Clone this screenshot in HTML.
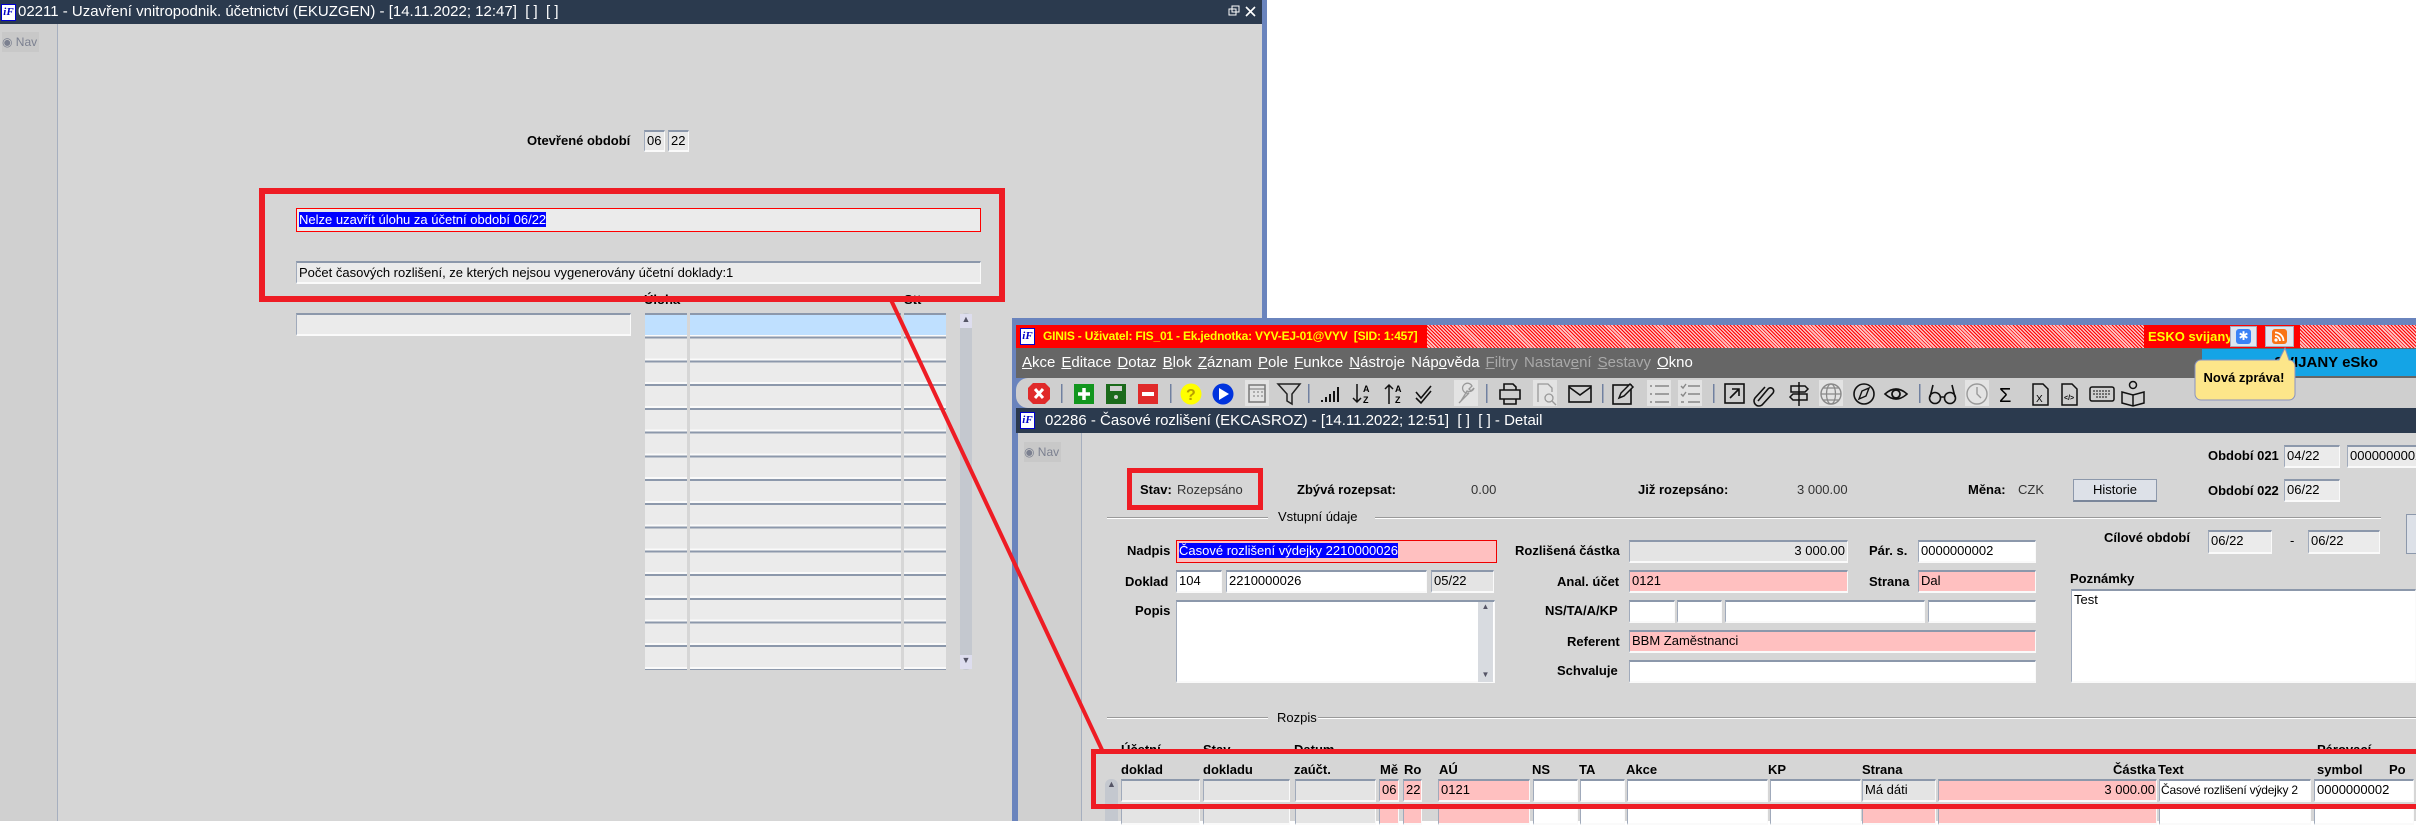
<!DOCTYPE html>
<html><head><meta charset="utf-8">
<style>
*{margin:0;padding:0;box-sizing:border-box}
body{width:2416px;height:821px;position:relative;overflow:hidden;background:#fff;font-family:"Liberation Sans",Arial,sans-serif;font-size:13px;color:#000}
.a{position:absolute}
.tb{background:#2b3a4e;color:#fff;font-size:15px;white-space:nowrap}
.f{position:absolute;background:#ebebeb;border-top:2px solid #8c98ab;border-left:1px solid #a0aabb;border-right:1px solid #fafafa;border-bottom:2px solid #fafafa;font-size:13px;line-height:18px;padding-left:2px;white-space:nowrap;overflow:hidden}
.w{background:#fff}.p{background:#ffc0c0}.g{background:#e4e4e4}
.l{position:absolute;font-weight:bold;font-size:13px;white-space:nowrap}
.t{position:absolute;font-size:13px;white-space:nowrap}
.ico{position:absolute;width:15px;height:17px;background:#fff;border:1px solid #00c;color:#0000c8;font:bold italic 11px "Liberation Serif",serif;line-height:15px;text-align:center}
.col{position:absolute;background:repeating-linear-gradient(to bottom,#8c98ab 0 2px,#ebebeb 2px 21.7px,#fafafa 21.7px 23.73px)}
.sel{background:#0000ff;color:#fff}
.menu span{margin-right:6px}
.menu u{text-decoration:underline}
.nav{position:absolute;height:20px;background:#c8c8c8;color:#7b8090;font-size:12px;line-height:20px;white-space:nowrap;padding-right:2px}
.hatch{background:repeating-linear-gradient(45deg,#f00 0 1px,#ffc4c4 1px 2.5px)}
</style></head><body>

<!-- LEFT WINDOW -->
<div class="a" style="left:0;top:0;width:1262px;height:821px;background:#d6d6d6"></div>
<div class="a tb" style="left:0;top:0;width:1262px;height:24px;line-height:24px;padding-left:18px">02211 - Uzavření vnitropodnik. účetnictví (EKUZGEN) - [14.11.2022; 12:47] &nbsp;[ ] &nbsp;[ ]</div>
<div class="ico" style="left:1px;top:4px">iF</div>
<svg class="a" style="left:1226px;top:4px" width="34" height="16"><rect x="3" y="5" width="7" height="6" fill="none" stroke="#fff"/><rect x="6" y="2" width="7" height="6" fill="none" stroke="#fff"/><path d="M20 3l9 9M29 3l-9 9" stroke="#fff" stroke-width="1.6"/></svg>
<div class="a" style="left:1262px;top:0;width:5px;height:821px;background:#6a84bd"></div>
<div class="a" style="left:0;top:24px;width:58px;height:797px;background:#d0d0d0;border-right:1px solid #a6afbf"></div>
<div class="nav" style="left:2px;top:32px">◉ Nav</div>

<div class="l" style="left:527px;top:133px">Otevřené období</div>
<div class="f" style="left:644px;top:130px;width:21px;height:22px;background:#e8e8e8">06</div>
<div class="f" style="left:668px;top:130px;width:21px;height:22px;background:#e8e8e8">22</div>

<div class="f" style="left:296px;top:208px;width:685px;height:24px;border:1px solid #f00;line-height:21px"><span class="sel">Nelze uzavřít úlohu za účetní období 06/22</span></div>
<div class="f" style="left:296px;top:261px;width:685px;height:23px;line-height:19px">Počet časových rozlišení, ze kterých nejsou vygenerovány účetní doklady:1</div>
<div class="l" style="left:644px;top:292px">Úloha</div>
<div class="l" style="left:904px;top:292px">Stt</div>
<div class="f" style="left:296px;top:313px;width:335px;height:23px"></div>
<div class="col" style="left:645px;top:313px;width:42px;height:357px"></div>
<div class="col" style="left:690px;top:313px;width:211px;height:357px"></div>
<div class="col" style="left:904px;top:313px;width:42px;height:357px"></div>
<div class="a" style="left:645px;top:315px;width:42px;height:20px;background:#bfe0ff"></div>
<div class="a" style="left:690px;top:315px;width:211px;height:20px;background:#bfe0ff"></div>
<div class="a" style="left:904px;top:315px;width:42px;height:20px;background:#bfe0ff"></div>
<div class="a" style="left:960px;top:313px;width:12px;height:357px;background:#c4c8cf;border-radius:6px"></div>
<div class="a" style="left:960px;top:314px;width:12px;height:14px;color:#556;font-size:9px;text-align:center;background:#dde">▲</div>
<div class="a" style="left:960px;top:655px;width:12px;height:14px;color:#556;font-size:9px;text-align:center;background:#dde">▼</div>

<div class="a" style="left:259px;top:188px;width:746px;height:114px;border:6px solid #ee1c24"></div>

<!-- RIGHT WINDOW -->
<div class="a" style="left:1012px;top:318px;width:1404px;height:503px;background:#6a84bd"></div>
<div class="a" style="left:1016px;top:325px;width:1400px;height:23px;background:#f00"></div>
<div class="a hatch" style="left:1427px;top:325px;width:717px;height:23px"></div>
<div class="a hatch" style="left:2300px;top:325px;width:116px;height:23px"></div>
<div class="ico" style="left:1020px;top:328px">iF</div>
<div class="a" style="left:1043px;top:325px;line-height:23px;color:#ff0;font-weight:bold;font-size:12px;letter-spacing:-0.2px;white-space:nowrap">GINIS - Uživatel: FIS_01 - Ek.jednotka: VYV-EJ-01@VYV &nbsp;[SID: 1:457]</div>
<div class="a" style="left:2148px;top:325px;line-height:23px;color:#ff0;font-weight:bold;font-size:13px;white-space:nowrap">ESKO svijany</div>
<div class="a" style="left:2230px;top:326px;width:27px;height:21px;background:#dfe6f0;border:1px solid #aab"></div>
<div class="a" style="left:2236px;top:329px;width:15px;height:15px;background:#3b82f6;border-radius:3px;color:#fff;font-size:12px;line-height:15px;text-align:center">✱</div>
<div class="a" style="left:2265px;top:326px;width:29px;height:21px;background:#dfe6f0;border:1px solid #aab"></div>
<div class="a" style="left:2272px;top:329px;width:15px;height:15px;background:#f97316;border-radius:3px"></div>
<svg class="a" style="left:2272px;top:329px" width="15" height="15"><circle cx="4" cy="11" r="1.6" fill="#fff"/><path d="M3 7a5 5 0 0 1 5 5M3 3.5a8.5 8.5 0 0 1 8.5 8.5" stroke="#fff" stroke-width="1.8" fill="none"/></svg>

<div class="a menu" style="left:1016px;top:348px;width:1400px;height:30px;background:#666;color:#fff;font-size:15px;line-height:30px;padding-left:6px;white-space:nowrap"><span><u>A</u>kce</span><span><u>E</u>ditace</span><span><u>D</u>otaz</span><span><u>B</u>lok</span><span><u>Z</u>áznam</span><span><u>P</u>ole</span><span><u>F</u>unkce</span><span><u>N</u>ástroje</span><span>Náp<u>o</u>věda</span><span style="color:#a9a9a9"><u>F</u>iltry</span><span style="color:#a9a9a9">Nastav<u>e</u>ní</span><span style="color:#a9a9a9"><u>S</u>estavy</span><span><u>O</u>kno</span></div>
<div class="a" style="left:2202px;top:349px;width:214px;height:27px;background:#14a4e6;font-weight:bold;font-size:15px;line-height:27px;padding-left:72px;color:#000">SVIJANY eSko</div>

<!-- toolbar -->
<div class="a" style="left:1016px;top:378px;width:1400px;height:30px;background:#cfcfcf;border-radius:12px 0 0 12px"></div>
<svg class="a" style="left:1012px;top:378px" width="1404" height="30">
<polygon points="21,5 33,5 38,10 38,21 33,26 21,26 16,21 16,10" fill="#e02a2a"/><path d="M23 11l8 9M31 11l-8 9" stroke="#fff" stroke-width="3"/>
<rect x="49" y="6" width="1.5" height="19" fill="#7080a0"/>
<rect x="62" y="6" width="20" height="20" fill="#12961e"/><path d="M72 10v12M66 16h12" stroke="#fff" stroke-width="3.5"/>
<rect x="94" y="6" width="20" height="20" fill="#1b6a1b"/><rect x="98" y="8" width="12" height="5" fill="#d0d0d0"/><circle cx="104" cy="19" r="2" fill="#d0d0d0"/>
<rect x="126" y="6" width="20" height="20" fill="#e02a2a"/><rect x="130" y="14" width="12" height="4" fill="#fff"/>
<rect x="158" y="6" width="1.5" height="19" fill="#7080a0"/>
<circle cx="179" cy="16" r="10.5" fill="#ffff00"/><text x="174" y="22" font-size="16" font-weight="bold" fill="#b8a000">?</text>
<circle cx="211" cy="16" r="10.5" fill="#0033dd"/><polygon points="207,10 217,16 207,22" fill="#fff"/>
<rect x="233" y="2" width="24" height="26" fill="#e3e3e3"/><rect x="237" y="7" width="16" height="17" fill="none" stroke="#777" stroke-width="1.5"/><path d="M237 11h16M241 14h2M245 14h2M249 14h2M241 18h2M245 18h2M249 18h2" stroke="#777"/>
<path d="M266 6h22l-8 10v10l-5-3v-7z" fill="none" stroke="#222" stroke-width="1.5"/>
<rect x="296" y="6" width="1.5" height="19" fill="#7080a0"/>
<path d="M310 24v-2M314 24v-5M318 24v-8M322 24v-11M326 24v-15" stroke="#111" stroke-width="2"/>
<path d="M345 6v18M341 20l4 4 4-4" stroke="#111" stroke-width="1.5" fill="none"/><text x="351" y="14" font-size="9" font-weight="bold">A</text><text x="351" y="25" font-size="9" font-weight="bold">Z</text>
<path d="M377 26v-18M373 11l4-4 4 4" stroke="#111" stroke-width="1.5" fill="none"/><text x="383" y="14" font-size="9" font-weight="bold">A</text><text x="383" y="25" font-size="9" font-weight="bold">Z</text>
<path d="M404 14l5 6 10-12M404 20l5 5 10-12" stroke="#111" stroke-width="1.6" fill="none"/>
<rect x="442" y="2" width="24" height="26" fill="#e3e3e3"/><path d="M447 25l10-10a5 5 0 1 1 3-7l-3 3 2 2 3-3a5 5 0 0 1-7 3l-6 10z" fill="none" stroke="#999" stroke-width="1.3"/>
<rect x="474" y="6" width="1.5" height="19" fill="#7080a0"/>
<path d="M488 12h20v9h-20zM492 12v-6h9l3 3v3M492 21v5h12v-5" fill="none" stroke="#111" stroke-width="1.6"/>
<rect x="521" y="2" width="24" height="26" fill="#e3e3e3"/><path d="M526 24v-18h10l4 4v4" fill="none" stroke="#999" stroke-width="1.3"/><circle cx="537" cy="20" r="4" fill="none" stroke="#999" stroke-width="1.3"/><path d="M540 23l4 4" stroke="#999" stroke-width="1.3"/>
<rect x="557" y="8" width="22" height="16" fill="none" stroke="#111" stroke-width="1.6"/><path d="M557 9l11 8 11-8" fill="none" stroke="#111" stroke-width="1.6"/>
<rect x="590" y="6" width="1.5" height="19" fill="#7080a0"/>
<rect x="601" y="7" width="18" height="19" fill="none" stroke="#111" stroke-width="1.6"/><path d="M607 20l2-5 9-9 3 3-9 9z" fill="#cfcfcf" stroke="#111" stroke-width="1.5"/>
<rect x="635" y="2" width="24" height="26" fill="#e3e3e3"/><path d="M643 8h14M643 16h14M643 24h14M638 8h2M638 16h2M638 24h2" stroke="#888" stroke-width="1.5"/>
<rect x="666" y="2" width="24" height="26" fill="#e3e3e3"/><path d="M676 8h12M676 16h12M676 24h12M669 8l2 2 3-4M669 16l2 2 3-4M669 24h3" stroke="#888" stroke-width="1.4" fill="none"/>
<rect x="701" y="6" width="1.5" height="19" fill="#7080a0"/>
<rect x="713" y="6" width="19" height="19" fill="none" stroke="#111" stroke-width="1.6"/><path d="M718 20l9-9M720 11h7v7" stroke="#111" stroke-width="1.6" fill="none"/>
<path d="M746 23l10-12a3 3 0 0 1 5 4l-11 12a5 5 0 0 1-7-7l10-11" fill="none" stroke="#111" stroke-width="1.6"/>
<path d="M787 4v24M779 8h14l3 3-3 3h-14zM795 16h-14l-3 3 3 3h14z" fill="none" stroke="#111" stroke-width="1.5"/>
<rect x="807" y="2" width="24" height="26" fill="#e3e3e3"/><circle cx="819" cy="16" r="10" fill="none" stroke="#888" stroke-width="1.4"/><ellipse cx="819" cy="16" rx="4.5" ry="10" fill="none" stroke="#888" stroke-width="1.2"/><path d="M809 16h20M811 10h16M811 22h16" stroke="#888" stroke-width="1.2"/>
<circle cx="852" cy="16" r="10" fill="none" stroke="#111" stroke-width="1.6"/><path d="M847 21l3-8 7-3-3 8z" fill="none" stroke="#111" stroke-width="1.4"/>
<path d="M873 16q11-10 22 0q-11 10-22 0z" fill="none" stroke="#111" stroke-width="1.6"/><circle cx="884" cy="16" r="4" fill="none" stroke="#111" stroke-width="1.8"/>
<rect x="907" y="6" width="1.5" height="19" fill="#7080a0"/>
<circle cx="923" cy="20" r="5.5" fill="none" stroke="#111" stroke-width="1.6"/><circle cx="938" cy="20" r="5.5" fill="none" stroke="#111" stroke-width="1.6"/><path d="M928 19h5M918 19l3-12M943 19l-3-12" stroke="#111" stroke-width="1.6" fill="none"/>
<rect x="953" y="2" width="24" height="26" fill="#e3e3e3"/><circle cx="965" cy="16" r="10" fill="none" stroke="#999" stroke-width="1.4"/><path d="M965 9v7l4 4" stroke="#999" stroke-width="1.4" fill="none"/>
<text x="987" y="24" font-size="20">Σ</text>
<path d="M1021 6h10l5 5v16h-15z" fill="none" stroke="#111" stroke-width="1.5"/><text x="1024" y="24" font-size="10">X</text>
<path d="M1050 6h10l5 5v16h-15z" fill="none" stroke="#111" stroke-width="1.5"/><text x="1052" y="22" font-size="7" font-weight="bold">&lt;/&gt;</text>
<rect x="1078" y="9" width="24" height="14" rx="2" fill="none" stroke="#111" stroke-width="1.5"/><path d="M1081 13h18M1081 16h18M1084 19h12" stroke="#111" stroke-dasharray="2 1"/>
<circle cx="1121" cy="7" r="3.5" fill="none" stroke="#111" stroke-width="1.5"/><path d="M1110 14l11 3 11-3v11l-11 3-11-3zM1121 17v11" fill="none" stroke="#111" stroke-width="1.5"/>
</svg>

<!-- tooltip -->
<svg class="a" style="left:2193px;top:346px" width="104" height="56"><path d="M8 14h78l6-12 4 12h0a6 6 0 0 1 6 6v28a6 6 0 0 1-6 6h-88a6 6 0 0 1-6-6v-28a6 6 0 0 1 6-6z" fill="#fde68a" stroke="#8a93c0"/></svg>
<div class="a" style="left:2196px;top:370px;width:96px;text-align:center;font-weight:bold;font-size:13px">Nová zpráva!</div>

<!-- subwindow title -->
<div class="a tb" style="left:1016px;top:408px;width:1400px;height:25px;line-height:25px;padding-left:29px">02286 - Časové rozlišení (EKCASROZ) - [14.11.2022; 12:51] &nbsp;[ ] &nbsp;[ ] - Detail</div>
<div class="ico" style="left:1020px;top:412px">iF</div>
<div class="a" style="left:1018px;top:433px;width:1398px;height:388px;background:#d6d6d6"></div>
<div class="a" style="left:1018px;top:433px;width:64px;height:388px;background:#d0d0d0;border-right:1px solid #a6afbf"></div>
<div class="nav" style="left:1024px;top:442px">◉ Nav</div>

<!-- form -->
<div class="a" style="left:1127px;top:468px;width:136px;height:42px;border:5px solid #ee1c24"></div>
<div class="l" style="left:1140px;top:482px">Stav:</div><div class="t" style="left:1177px;top:482px;color:#333">Rozepsáno</div>
<div class="l" style="left:1297px;top:482px">Zbývá rozepsat:</div><div class="t" style="left:1471px;top:482px;color:#333">0.00</div>
<div class="l" style="left:1638px;top:482px">Již rozepsáno:</div><div class="t" style="left:1797px;top:482px;color:#333">3 000.00</div>
<div class="l" style="left:1968px;top:482px">Měna:</div><div class="t" style="left:2018px;top:482px;color:#333">CZK</div>
<div class="a" style="left:2073px;top:479px;width:84px;height:23px;background:#dde1e8;border:1px solid #8c98ab;border-bottom:2px solid #7a869a;text-align:center;line-height:20px;font-size:13px">Historie</div>
<div class="l" style="left:2208px;top:448px">Období 021</div>
<div class="f" style="left:2284px;top:445px;width:56px;height:23px">04/22</div>
<div class="f" style="left:2347px;top:445px;width:80px;height:23px">0000000002</div>
<div class="l" style="left:2208px;top:483px">Období 022</div>
<div class="f" style="left:2284px;top:479px;width:56px;height:23px">06/22</div>

<div class="a" style="left:1107px;top:517px;width:161px;height:2px;background:#9a9a9a;border-bottom:1px solid #fff"></div>
<div class="t" style="left:1278px;top:509px">Vstupní údaje</div>
<div class="a" style="left:1375px;top:517px;width:1006px;height:2px;background:#9a9a9a;border-bottom:1px solid #fff"></div>

<div class="l" style="left:2104px;top:530px">Cílové období</div>
<div class="f" style="left:2208px;top:530px;width:64px;height:24px">06/22</div>
<div class="t" style="left:2290px;top:533px">-</div>
<div class="f" style="left:2308px;top:530px;width:72px;height:24px">06/22</div>
<div class="a" style="left:2406px;top:514px;width:12px;height:40px;background:#dde1e8;border:1px solid #8c98ab"></div>

<div class="l" style="left:1127px;top:543px">Nadpis</div>
<div class="f p" style="left:1176px;top:540px;width:321px;height:23px;border:1px solid #e00;line-height:20px"><span class="sel">Časové rozlišení výdejky 2210000026</span></div>
<div class="l" style="left:1515px;top:543px">Rozlišená částka</div>
<div class="f g" style="left:1629px;top:540px;width:219px;height:23px;text-align:right;padding-right:2px">3 000.00</div>
<div class="l" style="left:1869px;top:543px">Pár. s.</div>
<div class="f w" style="left:1918px;top:540px;width:118px;height:23px">0000000002</div>

<div class="l" style="left:1125px;top:574px">Doklad</div>
<div class="f w" style="left:1176px;top:570px;width:46px;height:23px">104</div>
<div class="f w" style="left:1226px;top:570px;width:201px;height:23px">2210000026</div>
<div class="f g" style="left:1431px;top:570px;width:63px;height:23px">05/22</div>
<div class="l" style="left:1557px;top:574px">Anal. účet</div>
<div class="f p" style="left:1629px;top:570px;width:219px;height:23px">0121</div>
<div class="l" style="left:1869px;top:574px">Strana</div>
<div class="f p" style="left:1918px;top:570px;width:118px;height:23px">Dal</div>
<div class="l" style="left:2070px;top:571px">Poznámky</div>
<div class="f w" style="left:2071px;top:589px;width:345px;height:94px">Test</div>

<div class="l" style="left:1135px;top:603px">Popis</div>
<div class="f w" style="left:1176px;top:600px;width:319px;height:83px"></div>
<div class="a" style="left:1478px;top:602px;width:15px;height:80px;background:#d8dbe0"></div>
<div class="a" style="left:1478px;top:602px;width:15px;height:12px;font-size:8px;color:#556;text-align:center">▲</div>
<div class="a" style="left:1478px;top:670px;width:15px;height:12px;font-size:8px;color:#556;text-align:center">▼</div>
<div class="l" style="left:1545px;top:603px">NS/TA/A/KP</div>
<div class="f w" style="left:1629px;top:600px;width:46px;height:23px"></div>
<div class="f w" style="left:1677px;top:600px;width:45px;height:23px"></div>
<div class="f w" style="left:1725px;top:600px;width:200px;height:23px"></div>
<div class="f w" style="left:1928px;top:600px;width:108px;height:23px"></div>
<div class="l" style="left:1567px;top:634px">Referent</div>
<div class="f p" style="left:1629px;top:630px;width:407px;height:23px">BBM Zaměstnanci</div>
<div class="l" style="left:1557px;top:663px">Schvaluje</div>
<div class="f w" style="left:1629px;top:660px;width:407px;height:23px"></div>

<div class="a" style="left:1107px;top:717px;width:161px;height:2px;background:#9a9a9a;border-bottom:1px solid #fff"></div>
<div class="t" style="left:1277px;top:710px">Rozpis</div>
<div class="a" style="left:1318px;top:717px;width:1098px;height:2px;background:#9a9a9a;border-bottom:1px solid #fff"></div>

<div class="l" style="left:1121px;top:742px">Účetní</div><div class="l" style="left:1203px;top:742px">Stav</div><div class="l" style="left:1294px;top:742px">Datum</div><div class="l" style="left:2317px;top:742px">Párovací</div>
<div class="l" style="left:1121px;top:762px">doklad</div><div class="l" style="left:1203px;top:762px">dokladu</div><div class="l" style="left:1294px;top:762px">zaúčt.</div>
<div class="l" style="left:1380px;top:762px">Mě</div><div class="l" style="left:1404px;top:762px">Ro</div><div class="l" style="left:1439px;top:762px">AÚ</div>
<div class="l" style="left:1532px;top:762px">NS</div><div class="l" style="left:1579px;top:762px">TA</div><div class="l" style="left:1626px;top:762px">Akce</div>
<div class="l" style="left:1768px;top:762px">KP</div><div class="l" style="left:1862px;top:762px">Strana</div><div class="l" style="left:2113px;top:762px">Částka</div>
<div class="l" style="left:2158px;top:762px">Text</div><div class="l" style="left:2317px;top:762px">symbol</div><div class="l" style="left:2389px;top:762px">Po</div>

<div class="a" style="left:1105px;top:779px;width:13px;height:42px;background:#c4c8cf;border-radius:6px 6px 0 0;font-size:9px;color:#556;text-align:center">▲</div>
<div class="f g" style="left:1121px;top:779px;width:79px;height:23px"></div>
<div class="f g" style="left:1203px;top:779px;width:87px;height:23px"></div>
<div class="f g" style="left:1295px;top:779px;width:81px;height:23px"></div>
<div class="f p" style="left:1379px;top:779px;width:20px;height:23px">06</div>
<div class="f p" style="left:1403px;top:779px;width:19px;height:23px">22</div>
<div class="f p" style="left:1438px;top:779px;width:92px;height:23px">0121</div>
<div class="f w" style="left:1533px;top:779px;width:45px;height:23px"></div>
<div class="f w" style="left:1580px;top:779px;width:45px;height:23px"></div>
<div class="f w" style="left:1627px;top:779px;width:141px;height:23px"></div>
<div class="f w" style="left:1770px;top:779px;width:91px;height:23px"></div>
<div class="f g" style="left:1862px;top:779px;width:74px;height:23px">Má dáti</div>
<div class="f p" style="left:1938px;top:779px;width:219px;height:23px;text-align:right;padding-right:1px">3 000.00</div>
<div class="f w" style="left:2159px;top:779px;width:152px;height:23px;font-size:12px;letter-spacing:-0.2px;padding-left:1px">Časové rozlišení výdejky 2</div>
<div class="f w" style="left:2314px;top:779px;width:100px;height:23px">0000000002</div>

<div class="f g" style="left:1121px;top:805px;width:79px;height:20px"></div>
<div class="f g" style="left:1203px;top:805px;width:87px;height:20px"></div>
<div class="f g" style="left:1295px;top:805px;width:81px;height:20px"></div>
<div class="f p" style="left:1379px;top:805px;width:20px;height:20px"></div>
<div class="f p" style="left:1403px;top:805px;width:19px;height:20px"></div>
<div class="f p" style="left:1438px;top:805px;width:92px;height:20px"></div>
<div class="f w" style="left:1533px;top:805px;width:45px;height:20px"></div>
<div class="f w" style="left:1580px;top:805px;width:45px;height:20px"></div>
<div class="f w" style="left:1627px;top:805px;width:141px;height:20px"></div>
<div class="f w" style="left:1770px;top:805px;width:91px;height:20px"></div>
<div class="f p" style="left:1862px;top:805px;width:74px;height:20px"></div>
<div class="f p" style="left:1938px;top:805px;width:219px;height:20px"></div>
<div class="f w" style="left:2159px;top:805px;width:152px;height:20px"></div>
<div class="f w" style="left:2314px;top:805px;width:100px;height:20px"></div>

<div class="a" style="left:1091px;top:749px;width:1330px;height:60px;border:5px solid #ee1c24"></div>

<svg class="a" style="left:0;top:0" width="2416" height="821"><line x1="891" y1="300" x2="1103" y2="752" stroke="#ee1c24" stroke-width="4"/></svg>
</body></html>
